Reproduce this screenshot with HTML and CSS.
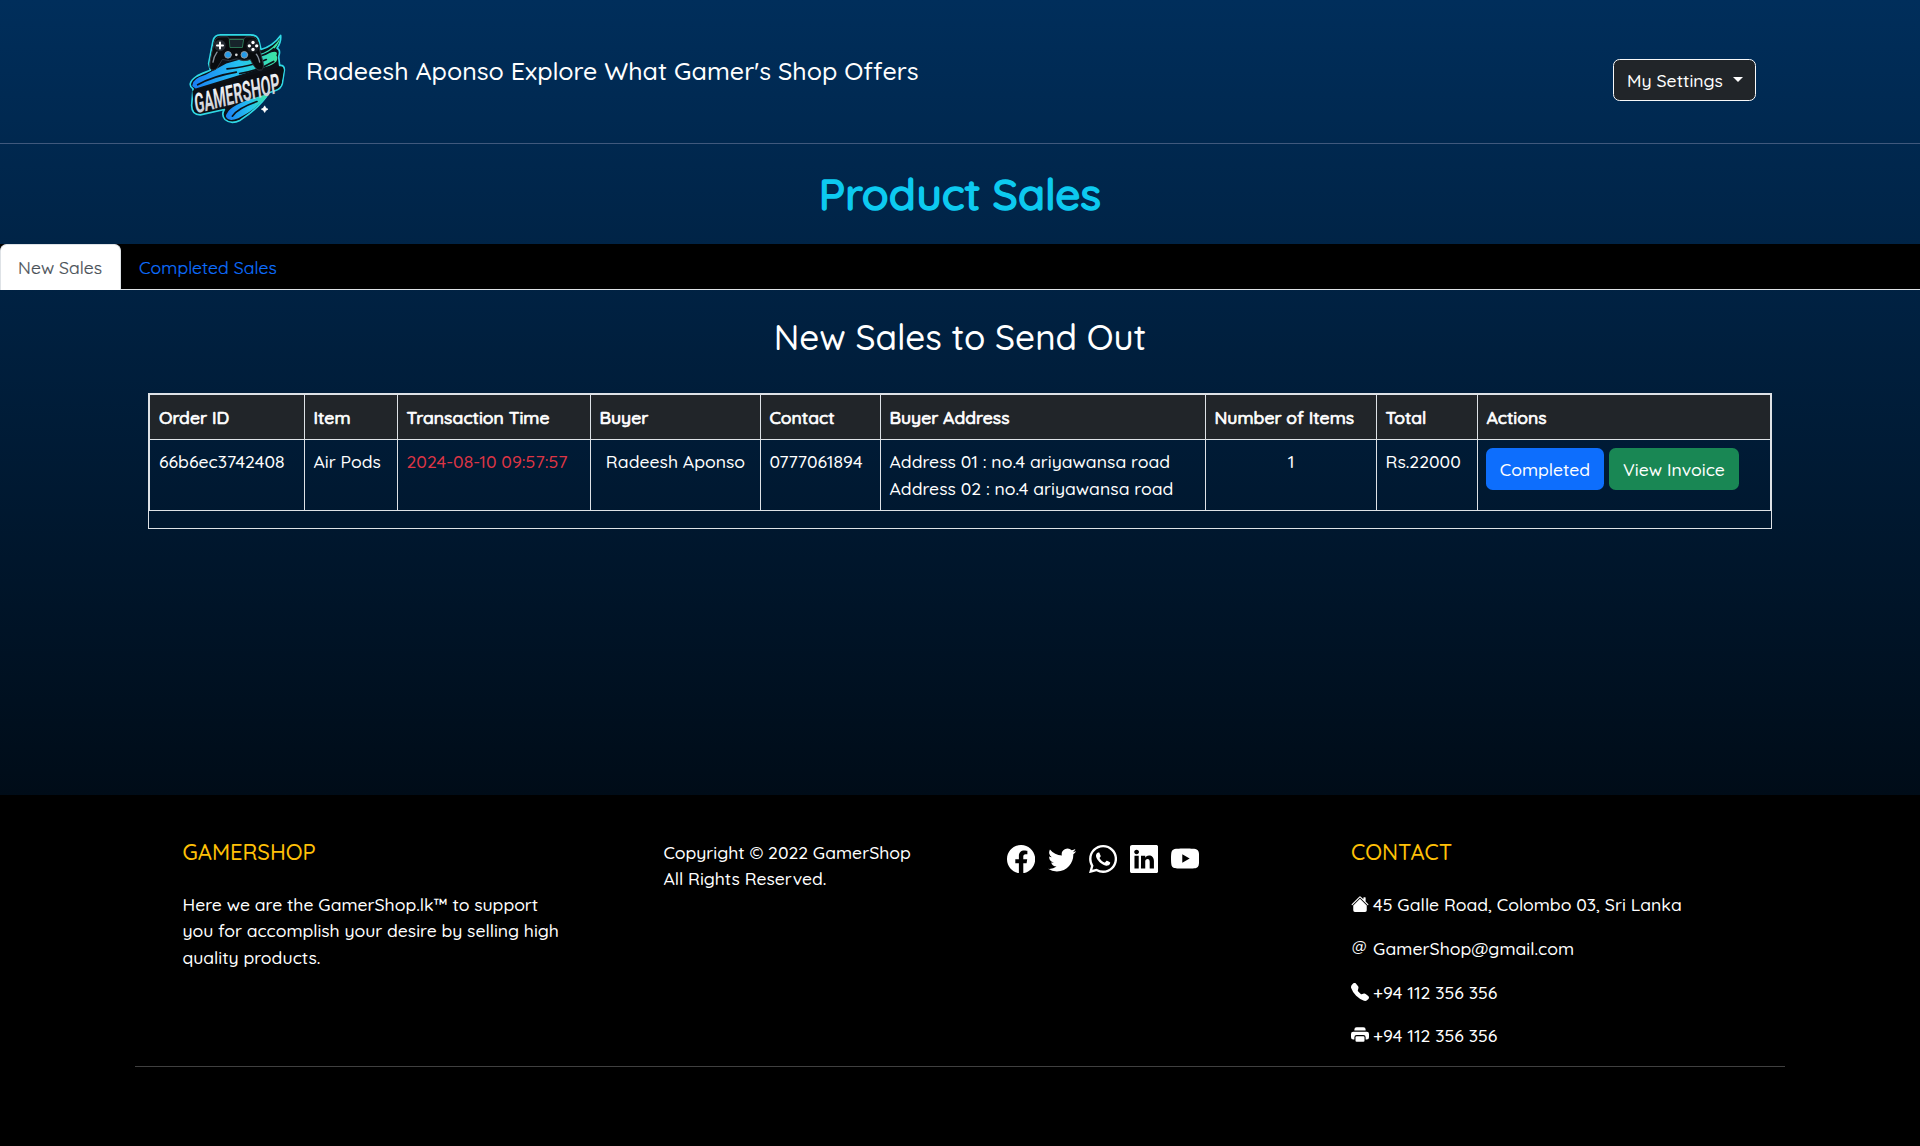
FILE: index.html
```html
<!DOCTYPE html>
<html lang="en">
<head>
<meta charset="utf-8">
<title>Product Sales</title>
<link rel="stylesheet" href="styles.css">
</head>
<body>
<header class="header">
  <svg class="logo" viewBox="40 30 330 290" role="img" aria-label="Gamershop">
    <defs>
      <linearGradient id="swoosh" x1="0" y1="0" x2="1" y2="0">
        <stop offset="0" stop-color="#1a7df5"/><stop offset=".55" stop-color="#25c4f0"/><stop offset="1" stop-color="#3fe89a"/>
      </linearGradient>
      <linearGradient id="steel" x1="0" y1="0" x2="0" y2="1">
        <stop offset="0" stop-color="#ffffff"/><stop offset="1" stop-color="#b9bec6"/>
      </linearGradient>
    </defs>
    <g stroke-linejoin="round" stroke-linecap="round">
      <path d="M62 190C68 168 100 160 122 150L117 130 130 62Q134 44 152 44H242Q264 44 268 62L274 88Q310 78 333 46Q335 66 322 84Q334 88 327 110L330 136Q345 134 344 150L338 190Q334 206 316 212L298 218Q270 262 212 300Q184 314 166 298Q154 284 164 268L92 284Q66 284 66 256L70 206Q60 200 62 190Z" fill="#0b1118" stroke="#2fd9e6" stroke-width="5"/>
      <path d="M68 198Q66 176 108 164L170 130 282 98Q314 82 331 54Q328 76 300 98Q328 88 320 106Q326 112 320 124Q310 134 290 140L78 205Z" fill="url(#swoosh)"/>
      <path d="M84 194Q130 168 200 156M172 146Q240 140 290 118M276 106Q300 98 312 86M210 160Q270 150 312 124" fill="none" stroke="#0b1118" stroke-width="5"/>
      <path d="M172 280Q184 250 300 220Q266 264 206 294Q176 306 169 290Q168 284 172 280Z" fill="url(#swoosh)"/>
      <path d="M188 288Q204 264 262 244" fill="none" stroke="#0b1118" stroke-width="5"/>
      <path d="M134 66Q138 50 154 50H174L178 56H224L228 50H244Q260 50 264 66L280 126Q286 152 268 150Q258 150 242 118Q224 126 200 116Q180 126 158 118L142 144Q130 156 121 144Q117 134 134 66Z" fill="#090b0e" stroke="#30363f" stroke-width="3"/>
      <path d="M180 58H222L218 82H182Z" fill="#17242b" stroke="#39a16f" stroke-width="2"/>
      <circle cx="151" cy="76" r="17" fill="#242a32"/>
      <path d="M151 67V85M142 76H160" stroke="#fff" stroke-width="6"/>
      <circle cx="250" cy="77" r="20" fill="#191e24"/>
      <g fill="#fff"><circle cx="250" cy="67" r="5"/><circle cx="250" cy="88" r="5"/><circle cx="239" cy="77" r="5"/><circle cx="261" cy="77" r="5"/></g>
      <g fill="#249ae8" stroke="#90979f" stroke-width="3"><circle cx="175" cy="104" r="10"/><circle cx="224" cy="104" r="10"/></g>
      <circle cx="200" cy="104" r="4" fill="#ddd"/>
      <path d="M130 126Q132 110 142 96M270 126Q266 108 260 102" fill="none" stroke="#848d99" stroke-width="4"/>
      <path d="M68 212L330 142Q344 140 342 154L336 188Q334 200 322 203L92 278Q72 282 72 262Z" fill="#0b0e13"/>
    </g>
    <text class="logo-word" transform="translate(78 280) rotate(-14) skewX(-7)" textLength="263" lengthAdjust="spacingAndGlyphs" fill="url(#steel)">GAMERSHOP</text>
    <path d="M285 257Q287 265 295 267Q287 269 285 277Q283 269 275 267Q283 265 285 257Z" fill="#fff" stroke="#fff" stroke-width="2"/>
  </svg>
  <h4 class="welcome">Radeesh Aponso Explore What Gamer's Shop Offers</h4>
  <button class="btn btn-dark">My Settings<span class="caret"></span></button>
</header>

<main class="main">
  <h1 class="page-title">Product Sales</h1>
  <nav class="tabs">
    <a class="tab active">New Sales</a>
    <a class="tab">Completed Sales</a>
  </nav>
  <h2 class="section-title">New Sales to Send Out</h2>
  <div class="table-frame">
    <table class="sales">
      <colgroup><col class="c-id"><col class="c-item"><col class="c-time"><col class="c-buyer"><col class="c-contact"><col class="c-address"><col class="c-count"><col class="c-total"><col></colgroup>
      <thead>
        <tr><th>Order ID</th><th>Item</th><th>Transaction Time</th><th>Buyer</th><th>Contact</th><th>Buyer Address</th><th>Number of Items</th><th>Total</th><th>Actions</th></tr>
      </thead>
      <tbody>
        <tr>
          <td>66b6ec3742408</td>
          <td>Air Pods</td>
          <td class="time">2024-08-10 09:57:57</td>
          <td class="center">Radeesh Aponso</td>
          <td>0777061894</td>
          <td class="address">Address 01 : no.4 ariyawansa road<br>Address 02 : no.4 ariyawansa road</td>
          <td class="center">1</td>
          <td>Rs.22000</td>
          <td class="action-cell"><div class="actions"><button class="btn btn-primary">Completed</button><button class="btn btn-success">View Invoice</button></div></td>
        </tr>
      </tbody>
    </table>
  </div>
</main>

<footer class="footer">
  <div class="footer-row">
    <section class="about">
      <h5 class="footer-title">GAMERSHOP</h5>
      <p>Here we are the GamerShop.lk™ to support<br>you for accomplish your desire by selling high<br>quality products.</p>
    </section>
    <section class="copyright">Copyright © 2022 GamerShop<br>All Rights Reserved.</section>
    <section class="social">
      <svg viewBox="0 0 16 16"><path d="M16 8.049c0-4.446-3.582-8.05-8-8.05C3.58 0-.002 3.603-.002 8.05c0 4.017 2.926 7.347 6.75 7.951v-5.625h-2.03V8.05H6.75V6.275c0-2.017 1.195-3.131 3.022-3.131.876 0 1.791.157 1.791.157v1.98h-1.009c-.993 0-1.303.621-1.303 1.258v1.51h2.218l-.354 2.326H9.25V16c3.824-.604 6.75-3.934 6.75-7.951"/></svg>
      <svg viewBox="0 0 16 16"><path d="M5.026 15c6.038 0 9.341-5.003 9.341-9.334q.002-.211-.006-.422A6.7 6.7 0 0 0 16 3.542a6.7 6.7 0 0 1-1.889.518 3.3 3.3 0 0 0 1.447-1.817 6.5 6.5 0 0 1-2.087.793A3.286 3.286 0 0 0 7.875 6.03a9.32 9.32 0 0 1-6.767-3.429 3.29 3.29 0 0 0 1.018 4.382A3.3 3.3 0 0 1 .64 6.575v.045a3.29 3.29 0 0 0 2.632 3.218 3.2 3.2 0 0 1-.865.115 3 3 0 0 1-.614-.057 3.28 3.28 0 0 0 3.067 2.277A6.6 6.6 0 0 1 .78 13.58a6 6 0 0 1-.78-.045A9.34 9.34 0 0 0 5.026 15"/></svg>
      <svg viewBox="0 0 16 16"><path d="M13.601 2.326A7.85 7.85 0 0 0 7.994 0C3.627 0 .068 3.558.064 7.926c0 1.399.366 2.76 1.057 3.965L0 16l4.204-1.102a7.9 7.9 0 0 0 3.79.965h.004c4.368 0 7.926-3.558 7.93-7.93A7.9 7.9 0 0 0 13.6 2.326zM7.994 14.521a6.6 6.6 0 0 1-3.356-.92l-.24-.144-2.494.654.666-2.433-.156-.251a6.56 6.56 0 0 1-1.007-3.505c0-3.626 2.957-6.584 6.591-6.584a6.56 6.56 0 0 1 4.66 1.931 6.56 6.56 0 0 1 1.928 4.66c-.004 3.639-2.961 6.592-6.592 6.592m3.615-4.934c-.197-.099-1.17-.578-1.353-.646-.182-.065-.315-.099-.445.099-.133.197-.513.646-.627.775-.114.133-.232.148-.43.05-.197-.1-.836-.308-1.592-.985-.59-.525-.985-1.175-1.103-1.372-.114-.198-.011-.304.088-.403.087-.088.197-.232.296-.346.1-.114.133-.198.198-.33.065-.134.034-.248-.015-.347-.05-.099-.445-1.076-.612-1.47-.16-.389-.323-.335-.445-.34-.114-.007-.247-.007-.38-.007a.73.73 0 0 0-.529.247c-.182.198-.691.677-.691 1.654s.71 1.916.81 2.049c.098.133 1.394 2.132 3.383 2.992.47.205.84.326 1.129.418.475.152.904.129 1.246.08.38-.058 1.171-.48 1.338-.943.164-.464.164-.86.114-.943-.049-.084-.182-.133-.38-.232"/></svg>
      <svg viewBox="0 0 16 16"><path d="M0 1.146C0 .513.526 0 1.175 0h13.65C15.474 0 16 .513 16 1.146v13.708c0 .633-.526 1.146-1.175 1.146H1.175C.526 16 0 15.487 0 14.854zm4.943 12.248V6.169H2.542v7.225zm-1.2-8.212c.837 0 1.358-.554 1.358-1.248-.015-.709-.52-1.248-1.342-1.248S2.4 3.226 2.4 3.934c0 .694.521 1.248 1.327 1.248zm4.908 8.212V9.359c0-.216.016-.432.08-.586.173-.431.568-.878 1.232-.878.869 0 1.216.662 1.216 1.634v3.865h2.401V9.25c0-2.22-1.184-3.252-2.764-3.252-1.274 0-1.845.7-2.165 1.193v.025h-.016l.016-.025V6.169h-2.4c.03.678 0 7.225 0 7.225z"/></svg>
      <svg viewBox="0 0 16 16"><path fill-rule="evenodd" d="M8 2C10 2 13.3 2.1 14.3 2.35A2 2 0 0 1 15.68 3.77C15.9 4.6 16 6.2 16 7.7S15.9 10.8 15.68 11.63A2 2 0 0 1 14.3 13.05C13.3 13.3 10 13.4 8 13.4S2.7 13.3 1.7 13.05A2 2 0 0 1 .32 11.63C.1 10.8 0 9.2 0 7.7S.1 4.6 .32 3.77A2 2 0 0 1 1.7 2.35C2.7 2.1 6 2 8 2ZM6.4 5.2V10.1L10.6 7.65Z"/></svg>
    </section>
    <section class="contact">
      <h5 class="footer-title">CONTACT</h5>
      <p class="line"><svg viewBox="0 0 16 16"><path d="M8.707 1.5a1 1 0 0 0-1.414 0L.646 8.146a.5.5 0 0 0 .708.708L8 2.207l6.646 6.647a.5.5 0 0 0 .708-.708L13 5.793V2.5a.5.5 0 0 0-.5-.5h-1a.5.5 0 0 0-.5.5v1.293z"/><path d="m8 3.293 6 6V13.5a1.5 1.5 0 0 1-1.5 1.5h-9A1.5 1.5 0 0 1 2 13.5V9.293z"/></svg>45 Galle Road, Colombo 03, Sri Lanka</p>
      <p class="line"><span class="at">@</span>GamerShop@gmail.com</p>
      <p class="line"><svg viewBox="0 0 16 16"><path d="M1.885.511a1.745 1.745 0 0 1 2.61.163L6.29 2.98c.329.423.445.974.315 1.494l-.547 2.19a.68.68 0 0 0 .178.643l2.457 2.457a.68.68 0 0 0 .644.178l2.189-.547a1.75 1.75 0 0 1 1.494.315l2.306 1.794c.829.645.905 1.87.163 2.611l-1.034 1.034c-.74.74-1.846 1.065-2.877.702a18.6 18.6 0 0 1-7.01-4.42 18.6 18.6 0 0 1-4.42-7.009c-.362-1.03-.037-2.137.703-2.877z"/></svg>+94 112 356 356</p>
      <p class="line"><svg viewBox="0 0 16 16"><path d="M5 1a2 2 0 0 0-2 2v1h10V3a2 2 0 0 0-2-2zm6 8H5a1 1 0 0 0-1 1v3a1 1 0 0 0 1 1h6a1 1 0 0 0 1-1v-3a1 1 0 0 0-1-1"/><path d="M0 7a2 2 0 0 1 2-2h12a2 2 0 0 1 2 2v3a2 2 0 0 1-2 2h-1v-2a2 2 0 0 0-2-2H5a2 2 0 0 0-2 2v2H2a2 2 0 0 1-2-2z"/></svg>+94 112 356 356</p>
    </section>
  </div>
  <hr class="rule">
</footer>
</body>
</html>
```
FILE: styles.css
```css
* { box-sizing: border-box; }
h1, h2, h4, h5, p { margin: 0; font-weight: 500; }

body {
  margin: 0;
  min-height: 1146px;
  display: flex;
  flex-direction: column;
  background: linear-gradient(#002e5b 0, #000c18 795px);
  color: #fff;
  font: 500 17.6px/26.4px Quicksand, Lato, sans-serif;
}

.header {
  height: 144px;
  display: flex;
  align-items: flex-start;
  padding: 30px 164px 0 183px;
  border-bottom: 1px solid #40597d;
}
.logo { width: 110px; height: 97px; overflow: visible; }
.logo-word { font: 700 82px "Roboto", sans-serif; }
.welcome { margin: 25px auto 0 13px; font-size: 25px; line-height: 32px; }

.btn {
  height: 42px;
  padding: 0;
  border: 1px solid transparent;
  border-radius: 6.6px;
  color: #fff;
  font: inherit;
  white-space: nowrap;
}
.btn-dark {
  display: flex;
  align-items: center;
  gap: 10px;
  width: 143px;
  margin-top: 29px;
  padding-left: 13px;
  background: #212529;
  border-color: #f8f9fa;
}
.caret { border: 5px solid transparent; border-top-color: #fff; border-bottom: 0; margin-top: -1px; }
.btn-primary { width: 118px; padding-left: 1px; background: #0d6efd; }
.btn-success { width: 130px; padding-left: 1px; background: #198754; }

.main { flex: 0 0 651px; display: flex; flex-direction: column; }
.page-title {
  height: 100px;
  padding-top: 23px;
  color: #0dcaf0;
  font-size: 44px;
  line-height: 53px;
  text-align: center;
  -webkit-text-stroke: 1.5px #0dcaf0;
}
.tabs { display: flex; height: 46px; background: #000; border-bottom: 1px solid #dee2e6; }
.tab { height: 46px; padding: 10px 18px; color: #0d6efd; font-weight: 400; letter-spacing: .08px; white-space: nowrap; -webkit-text-stroke: .2px; }
.tab.active {
  width: 121px;
  background: #fff;
  border: 1px solid #dee2e6;
  border-bottom: 0;
  border-radius: 6.6px 6.6px 0 0;
  padding: 9px 0 0 17px;
  color: #495057;
}
.section-title { padding-top: 26px; font-size: 35px; line-height: 42px; text-align: center; }

.table-frame { width: 1624px; height: 136px; margin: 35px auto 0; border: 1px solid #dee2e6; }
.sales { width: 100%; table-layout: fixed; border-collapse: collapse; }
.c-id { width: 154.5px; }
.c-item { width: 93px; }
.c-time { width: 193px; }
.c-buyer { width: 170px; }
.c-contact { width: 120px; }
.c-address { width: 325px; }
.c-count { width: 171px; }
.c-total { width: 101px; }
.sales th, .sales td { padding: 8px 8px 0 9px; border: 1px solid #dee2e6; text-align: left; vertical-align: top; white-space: nowrap; }
.sales th { height: 45px; padding-top: 9px; background: #212529; font-weight: 500; -webkit-text-stroke: .7px #fff; }
.sales td { height: 71px; }
.sales td.address { line-height: 27px; }
.sales td.action-cell { padding-left: 8px; }
.sales td.time { color: #dc3545; }
.sales td.center { text-align: center; }
.actions { display: flex; gap: 5px; }

.footer { flex: 1; padding-top: 44px; background: #000; }
.footer-row { display: flex; height: 227px; padding-left: 182.5px; }
.about { width: 481px; letter-spacing: -.04px; }
.copyright { width: 343px; letter-spacing: -.04px; }
.social { width: 344.5px; display: flex; gap: 13px; padding-top: 5.5px; }
.social svg { width: 28.2px; height: 28.2px; }
.footer-title { margin-bottom: 26px; color: #ffc107; font-size: 22px; line-height: 26px; }
.contact .line { display: flex; margin-bottom: 17.4px; }
.contact svg { width: 18px; height: 18px; margin: 4px 4px 0 0; }
.at { width: 22px; padding-left: 1px; font-size: 15px; line-height: 24px; }
.rule { width: 1650px; margin: 0 auto; border: 0; border-top: 1px solid #404040; }
svg { fill: #fff; flex: none; }
```
